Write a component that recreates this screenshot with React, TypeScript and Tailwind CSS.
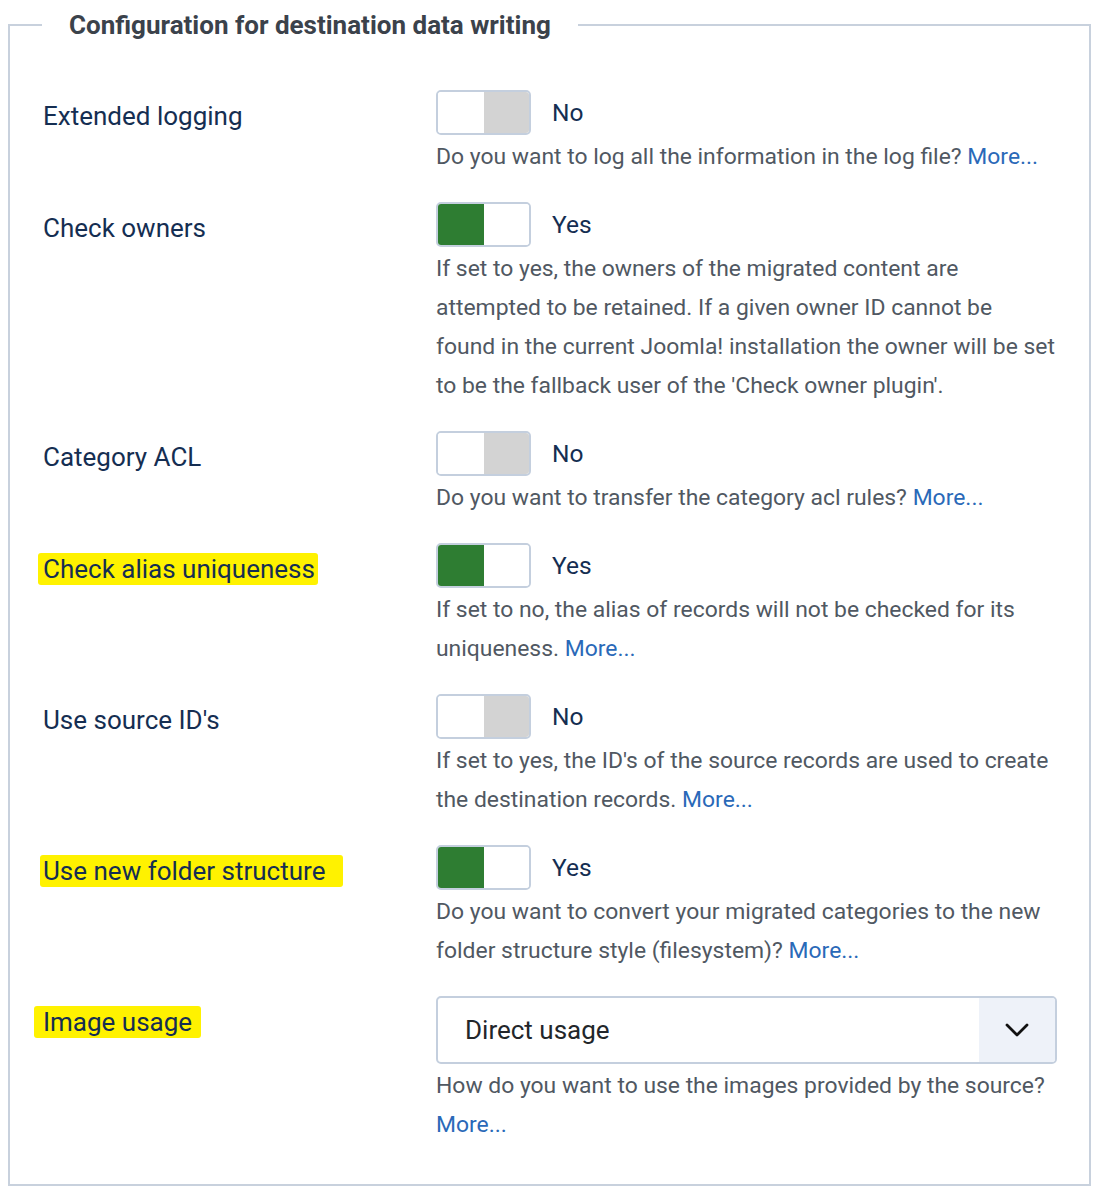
import { ReactNode } from 'react'

function Toggle({ on }: { on: boolean }) {
  return (
    <div className="flex items-center h-[45px]">
      <div className="flex w-[95px] h-[45px] rounded-[5px] border-2 border-[#c4cfde] overflow-hidden">
        <div className={on ? 'flex-1 bg-[#2e7d32]' : 'flex-1 bg-white'} />
        <div className={on ? 'flex-1 bg-white' : 'flex-1 bg-[#d3d3d3]'} />
      </div>
      <span className="ml-[21px] pt-[2px] text-[24.5px] text-[#152e52]">{on ? 'Yes' : 'No'}</span>
    </div>
  )
}

function More() {
  return <span className="text-[#2a69b8]">More...</span>
}

function Row({ label, mark, control, children }: { label: ReactNode; mark?: string; control: ReactNode; children: ReactNode }) {
  return (
    <div className="grid grid-cols-[393px_1fr] mb-[26px]">
      <div className="pt-[4px] leading-[45px] text-[26px] text-[#152e52]">
        {mark ? <span className={mark}>{label}</span> : label}
      </div>
      <div>
        {control}
        <p className="mt-[2px] leading-[39px] text-[22.9px] text-[#505862] pr-[20px]">{children}</p>
      </div>
    </div>
  )
}

export default function App() {
  return (
    <div className="bg-white min-h-[1200px] pl-[8px] pr-[18px] pt-[10px]" style={{ fontFamily: 'Roboto, "Noto Sans", sans-serif' }}>
      <fieldset className="border-2 border-[#c8d1dd] pl-[33px] pr-[12px] pt-[50px] pb-[40px]">
        <legend className="-ml-[1px] px-[27px] text-[26px] font-bold text-[#3b424b] leading-[30px]">
          Configuration for destination data writing
        </legend>

        <Row label="Extended logging" control={<Toggle on={false} />}>
          Do you want to log all the information in the log file? <More />
        </Row>

        <Row label="Check owners" control={<Toggle on={true} />}>
          If set to yes, the owners of the migrated content are attempted to be retained. If a given owner ID cannot be
          <br />
          found in the current Joomla! installation the owner will be set
          <br />
          to be the fallback user of the 'Check owner plugin'.
        </Row>

        <Row label="Category ACL" control={<Toggle on={false} />}>
          Do you want to transfer the category acl rules? <More />
        </Row>

        <Row
          label="Check alias uniqueness"
          mark="bg-[#fff200] pl-[5px] pr-[3px] -ml-[5px] py-[1px] rounded-[3px]"
          control={<Toggle on={true} />}
        >
          If set to no, the alias of records will not be checked for its uniqueness. <More />
        </Row>

        <Row label="Use source ID's" control={<Toggle on={false} />}>
          If set to yes, the ID's of the source records are used to create the destination records. <More />
        </Row>

        <Row
          label="Use new folder structure"
          mark="bg-[#fff200] pl-[3px] pr-[18px] -ml-[3px] py-[1px] rounded-[3px]"
          control={<Toggle on={true} />}
        >
          Do you want to convert your migrated categories to the new folder structure style (filesystem)? <More />
        </Row>

        <div className="grid grid-cols-[393px_1fr]">
          <div className="pt-[4px] leading-[45px] text-[26px] text-[#152e52]">
            <span className="bg-[#fff200] px-[9px] -ml-[9px] py-[1px] rounded-[3px]">Image usage</span>
          </div>
          <div>
            <div className="flex h-[68px] w-[621px] rounded-[5px] border-2 border-[#c4cfde] overflow-hidden">
              <div className="flex-1 flex items-center pl-[27px] text-[26px] text-[#22262a]">Direct usage</div>
              <div className="w-[76px] bg-[#eef2f9] flex items-center justify-center">
                <svg width="26" height="16" viewBox="0 0 26 16" fill="none">
                  <path d="M3 3l10 10L23 3" stroke="#111" strokeWidth="2.8" strokeLinecap="round" strokeLinejoin="round" />
                </svg>
              </div>
            </div>
            <p className="mt-[2px] leading-[39px] text-[22.9px] text-[#505862] pr-[20px]">
              How do you want to use the images provided by the source? <More />
            </p>
          </div>
        </div>
      </fieldset>
    </div>
  )
}
